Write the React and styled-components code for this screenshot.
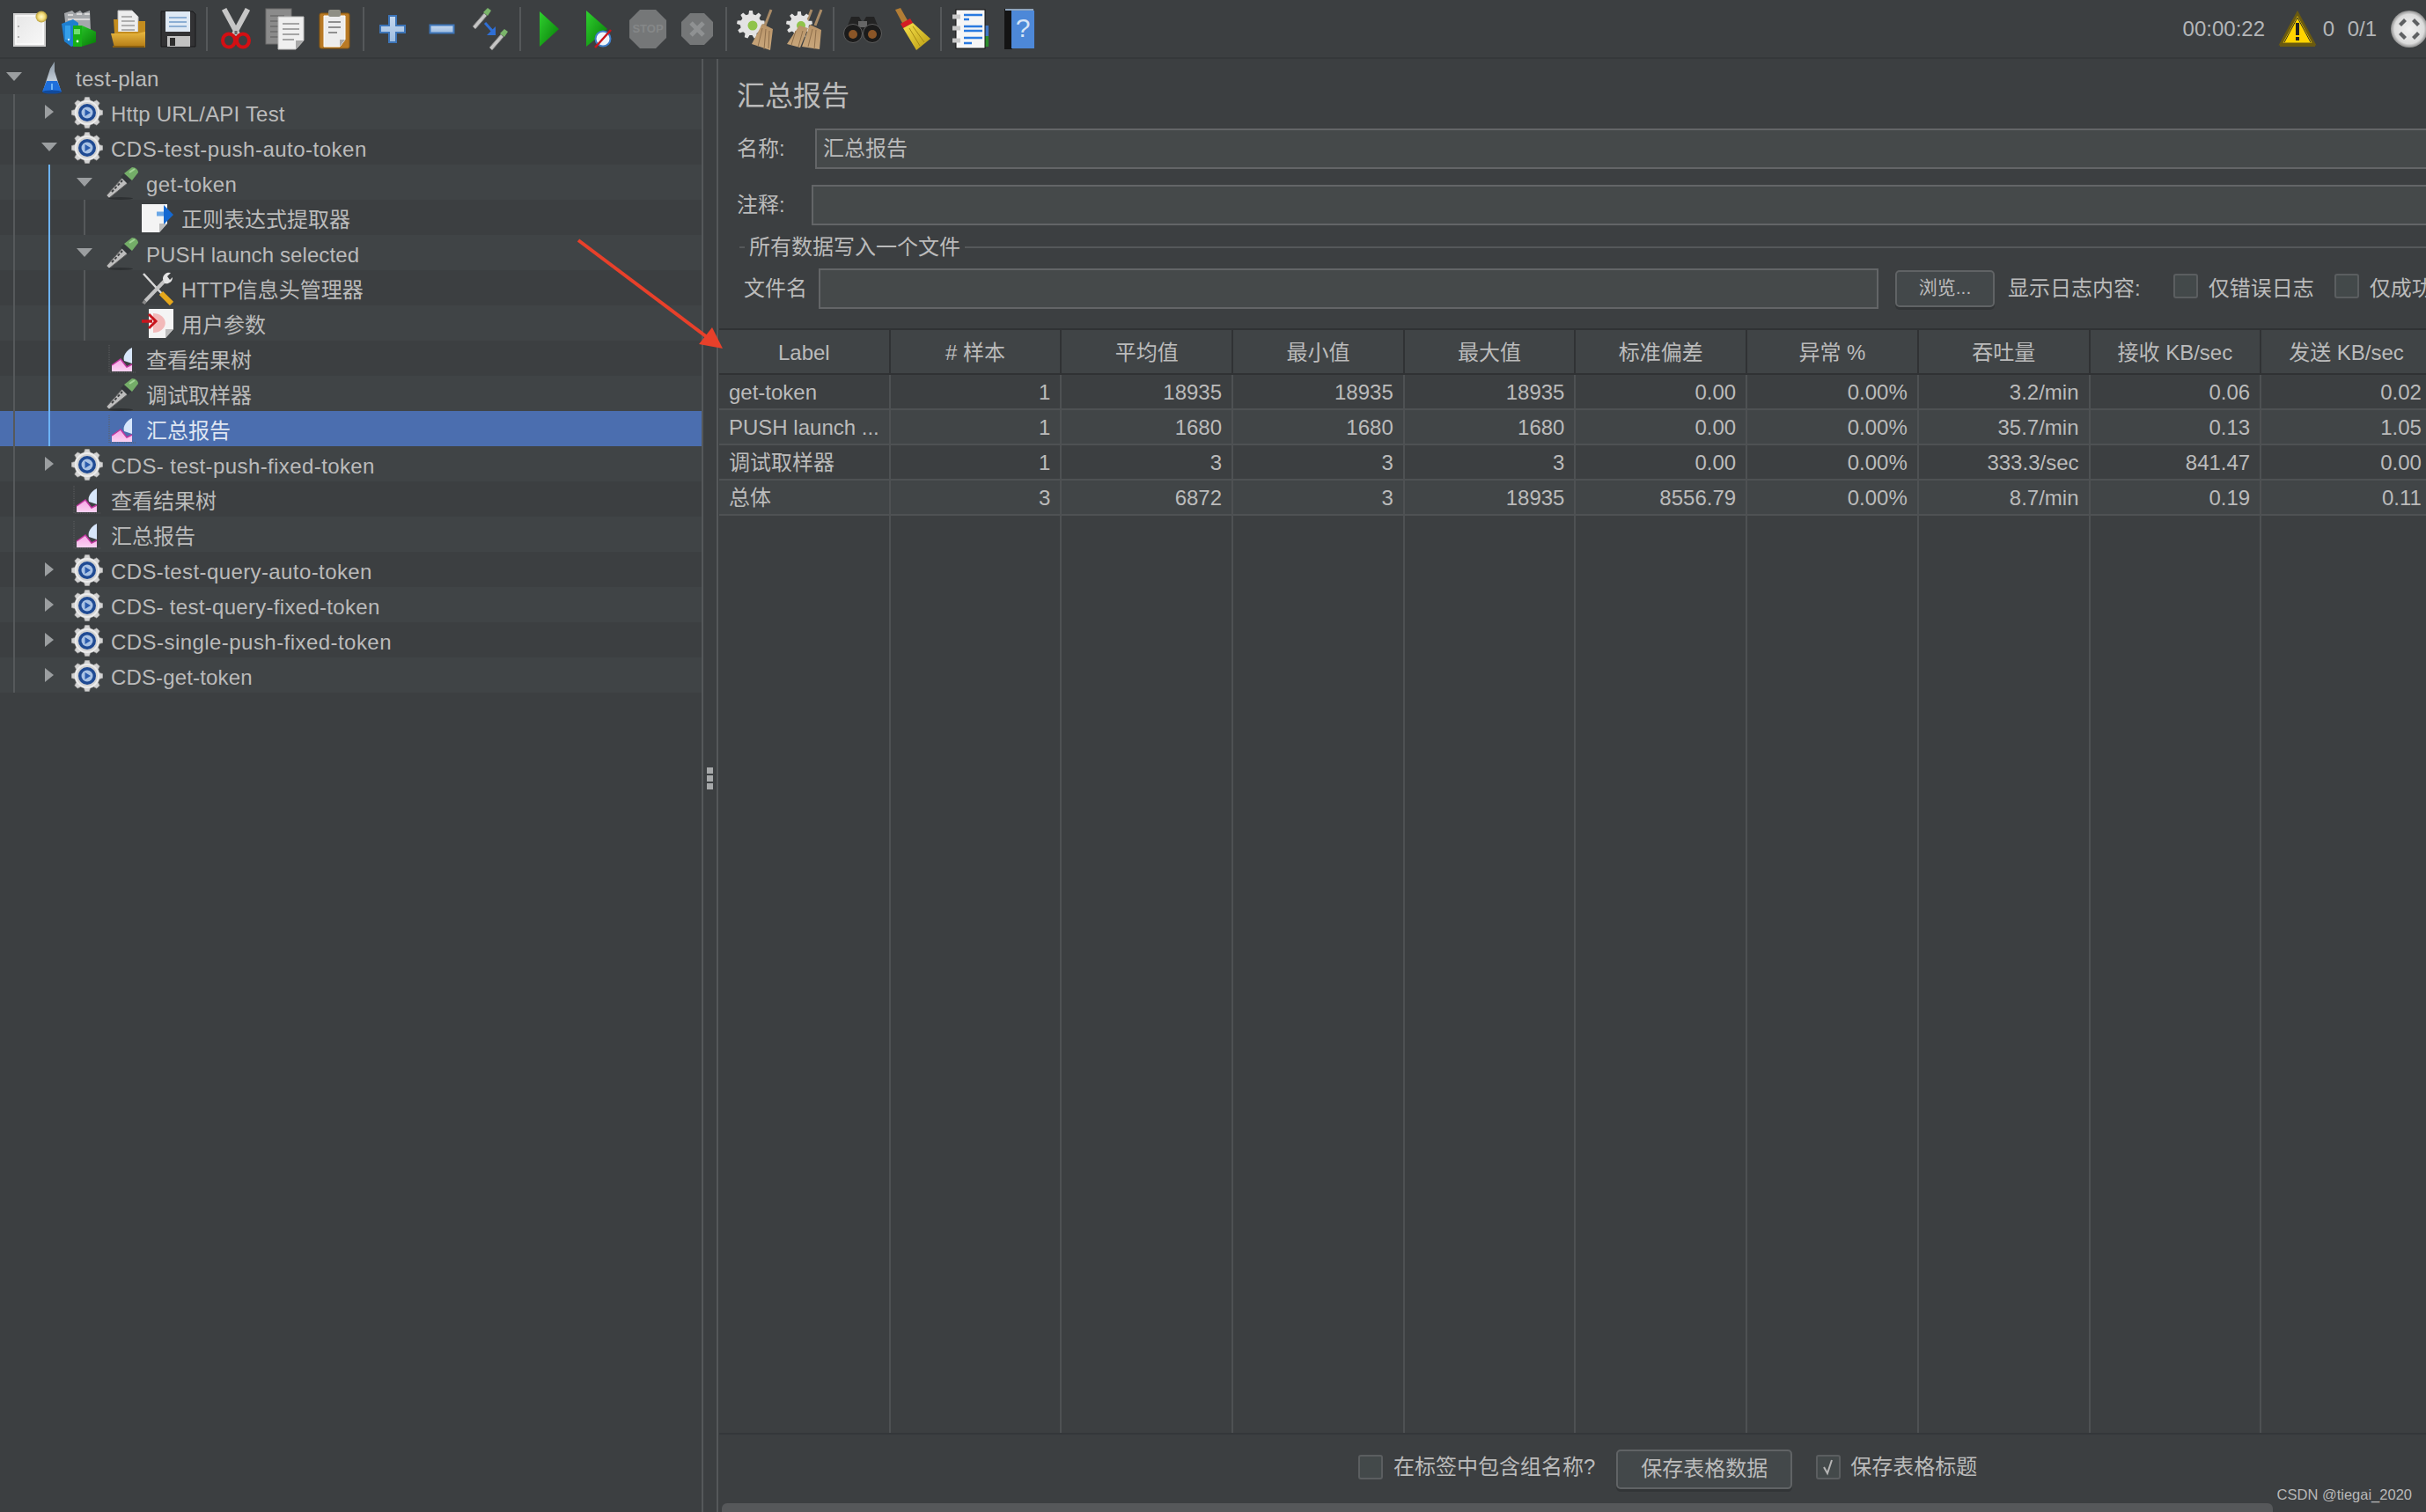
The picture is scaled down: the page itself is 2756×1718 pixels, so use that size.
import React from 'react';
import styled, {createGlobalStyle} from "styled-components";

const gearPath = (cx, cy, outer, inner, teeth) => {
    const pts = [];
    const step = (Math.PI * 2) / teeth;
    for (let i = 0; i < teeth; i++) {
        const a = i * step - Math.PI / 2;
        const corners = [[a - step * 0.32, inner], [a - step * 0.17, outer], [a + step * 0.17, outer], [a + step * 0.32, inner]];
        corners.forEach(([ang, r]) => {
            pts.push(`${(cx + Math.cos(ang) * r).toFixed(2)} ${(cy + Math.sin(ang) * r).toFixed(2)}`);
        });
    }
    return `M${pts.join('L')}Z`;
};

const SharedDefs = () => (
    <DefsSvg aria-hidden="true">
        <defs>
            <linearGradient id="paper" x1="0" y1="0" x2="1" y2="1">
                <stop offset="0" stopColor="#e6e6e6"/>
                <stop offset="1" stopColor="#f8f8f8"/>
            </linearGradient>
            <radialGradient id="glow">
                <stop offset="0" stopColor="#fff9c8"/>
                <stop offset="0.55" stopColor="#f4dd7c"/>
                <stop offset="1" stopColor="#b99f3a"/>
            </radialGradient>
            <linearGradient id="folder" x1="0" y1="0" x2="0" y2="1">
                <stop offset="0" stopColor="#e9b840"/>
                <stop offset="1" stopColor="#b27a14"/>
            </linearGradient>
            <linearGradient id="green" x1="0" y1="0" x2="1" y2="1">
                <stop offset="0" stopColor="#2fd12f"/>
                <stop offset="1" stopColor="#067a06"/>
            </linearGradient>
            <linearGradient id="bluePlus" x1="0" y1="0" x2="0" y2="1">
                <stop offset="0" stopColor="#c5d8ef"/>
                <stop offset="1" stopColor="#9dbce0"/>
            </linearGradient>
            <linearGradient id="broom" x1="0" y1="0" x2="0" y2="1">
                <stop offset="0" stopColor="#b99468"/>
                <stop offset="1" stopColor="#c9a77c"/>
            </linearGradient>
            <linearGradient id="yellowBroom" x1="0" y1="0" x2="1" y2="1">
                <stop offset="0" stopColor="#f8e24a"/>
                <stop offset="1" stopColor="#b89a12"/>
            </linearGradient>
            <radialGradient id="wheel">
                <stop offset="0" stopColor="#f2f2f2"/>
                <stop offset="0.8" stopColor="#dcdcdc"/>
                <stop offset="1" stopColor="#8d8d8d"/>
            </radialGradient>
            <linearGradient id="flask" x1="0" y1="0" x2="0" y2="1">
                <stop offset="0" stopColor="#8795a3"/>
                <stop offset="1" stopColor="#e3ebf3"/>
            </linearGradient>
            <linearGradient id="pink" x1="0" y1="0" x2="0" y2="1">
                <stop offset="0" stopColor="#f6a6e6"/>
                <stop offset="1" stopColor="#fbd2f2"/>
            </linearGradient>
        </defs>
    </DefsSvg>
);

const NewDocIcon = () => (
    <svg width="40" height="42" viewBox="0 0 40 42">
        <rect x="2" y="4" width="35" height="36" fill="url(#paper)" stroke="#d2d2d2" strokeWidth="2"/>
        <rect x="4" y="6" width="31" height="32" fill="none" stroke="#fff" strokeWidth="1"/>
        <circle cx="7" cy="18" r="1" fill="#9a9a9a"/>
        <circle cx="7" cy="30" r="1" fill="#9a9a9a"/>
        <circle cx="33" cy="7" r="6.5" fill="url(#glow)"/>
    </svg>
);

const TemplateIcon = () => (
    <svg width="42" height="46" viewBox="0 0 42 46">
        <path d="M4 5l9-3 3 3 6-3 3 3 8-3 1 22H6z" fill="#a5a8ab"/>
        <path d="M8 7h6M18 6h6M27 6h6M8 12h25" stroke="#d8d8d8" strokeWidth="2"/>
        <path d="M1 17l13-5 6 4v24l-8 3-8-6z" fill="#1d7fd0"/>
        <rect x="5" y="19" width="6" height="16" fill="#35a0ea"/>
        <circle cx="9" cy="35" r="1.2" fill="#d7eefc"/>
        <path d="M14 20l10-1 16 7v12l-17 5-9-1z" fill="url(#green)"/>
        <rect x="14" y="19" width="10" height="24" fill="#17b017"/>
        <rect x="15" y="23" width="7" height="6" fill="#6fe06f"/>
        <circle cx="19" cy="37" r="1.4" fill="#e5ffe5"/>
    </svg>
);

const OpenIcon = () => (
    <svg width="42" height="46" viewBox="0 0 42 46">
        <path d="M9 2h16l7 7v18H9z" fill="#ededed" stroke="#bdbdbd"/>
        <path d="M13 9h12M13 14h15M13 19h15M13 24h15" stroke="#9a9a9a" strokeWidth="1.5"/>
        <path d="M4 12h5v14h23V14h8v28H6z" fill="#c48d1f"/>
        <path d="M1 28h30l9-2v18H5z" fill="url(#folder)"/>
        <rect x="3" y="42" width="36" height="2" fill="#8b5f10"/>
    </svg>
);

const SaveIcon = () => (
    <svg width="42" height="46" viewBox="0 0 42 46">
        <path d="M2 3h36l3 3v37H2z" fill="#323234" stroke="#18181a"/>
        <rect x="7" y="3" width="28" height="23" fill="#dfe9f4"/>
        <path d="M11 10h20M11 15h20M11 20h20" stroke="#8dafd4" strokeWidth="2"/>
        <rect x="9" y="31" width="26" height="12" fill="#c2c2c2"/>
        <rect x="12" y="33" width="6" height="9" fill="#2e2e2e"/>
    </svg>
);

const ScissorsIcon = () => (
    <svg width="36" height="48" viewBox="0 0 36 48">
        <path d="M6 4l13 24M30 4L17 28" stroke="#c6c6c6" strokeWidth="6" strokeLinecap="square"/>
        <path d="M18 26v4" stroke="#666" strokeWidth="3"/>
        <ellipse cx="10" cy="37" rx="7" ry="7.5" fill="none" stroke="#d30f13" strokeWidth="4"/>
        <ellipse cx="26" cy="37" rx="7" ry="7.5" fill="none" stroke="#d30f13" strokeWidth="4"/>
    </svg>
);

const CopyIcon = () => (
    <svg width="46" height="50" viewBox="0 0 46 50">
        <rect x="1" y="2" width="29" height="40" fill="#8b8b8b" stroke="#6f6f6f"/>
        <path d="M6 10h16M6 16h16M6 22h16M6 28h16M6 34h16" stroke="#737373" strokeWidth="2"/>
        <path d="M15 11h29v27l-9 10H15z" fill="#efefef" stroke="#bdbdbd"/>
        <path d="M35 48V38h9z" fill="#a8a8a8"/>
        <path d="M20 19h19M20 25h19M20 31h19M20 37h13" stroke="#a5a5a5" strokeWidth="2"/>
    </svg>
);

const PasteIcon = () => (
    <svg width="36" height="48" viewBox="0 0 36 48">
        <rect x="1" y="6" width="34" height="40" rx="2" fill="#b97a25" stroke="#8a5810"/>
        <path d="M6 9h24v27l-6 8H6z" fill="#ededed" stroke="#fff"/>
        <path d="M24 44v-8h6z" fill="#aaa"/>
        <rect x="11" y="2" width="14" height="8" rx="2" fill="#8f8f85"/>
        <path d="M11 16h14M11 22h14M11 28h10" stroke="#8f8f8f" strokeWidth="2"/>
    </svg>
);

const PlusIcon = () => (
    <svg width="30" height="34" viewBox="0 0 30 34">
        <path d="M11 2h8v11h10v8H19v11h-8V21H1v-8h10z" fill="url(#bluePlus)" stroke="#3d75b8" strokeWidth="2"/>
    </svg>
);

const MinusIcon = () => (
    <svg width="30" height="12" viewBox="0 0 30 12">
        <rect x="1.5" y="1.5" width="27" height="9" fill="url(#bluePlus)" stroke="#3d75b8" strokeWidth="2"/>
    </svg>
);

const MiniPipette = ({x, y}) => (
    <g transform={`translate(${x} ${y})`}>
        <path d="M1 22L14 7l3 3L4 25z" fill="#c5c5c5" stroke="#7d7d7d"/>
        <path d="M13 6l5-5 4 3-4 6z" fill="#7ab56a"/>
    </g>
);

const ToggleIcon = () => (
    <svg width="44" height="50" viewBox="0 0 44 50">
        <MiniPipette x={0} y={0}/>
        <MiniPipette x={19} y={24}/>
        <path d="M15 18l9 10" stroke="#2f6fd6" strokeWidth="3"/>
        <path d="M27 22v10H17z" fill="#2f6fd6"/>
    </svg>
);

const PlayIcon = () => (
    <svg width="24" height="44" viewBox="0 0 24 44">
        <path d="M1 2l22 20L1 42z" fill="url(#green)"/>
    </svg>
);

const PlayNoTimerIcon = () => (
    <svg width="30" height="44" viewBox="0 0 30 44">
        <path d="M1 1l24 21L1 42z" fill="url(#green)"/>
        <circle cx="20" cy="33" r="8.5" fill="#eef4fb" stroke="#3f7dc8" strokeWidth="2"/>
        <path d="M11 43l18-20" stroke="#c9141a" strokeWidth="2.5"/>
    </svg>
);

const StopIcon = () => (
    <svg width="44" height="46" viewBox="0 0 44 46">
        <path d="M13 1h18l12 12v20L31 45H13L1 33V13z" fill="#757778"/>
        <StopText x="22" y="27" textAnchor="middle">STOP</StopText>
    </svg>
);

const ShutdownIcon = () => (
    <svg width="38" height="38" viewBox="0 0 38 38">
        <path d="M11 1h16l10 10v16L27 37H11L1 27V11z" fill="#757778"/>
        <path d="M12 12l14 14M26 12L12 26" stroke="#8f9192" strokeWidth="5"/>
    </svg>
);

const ClearIcon = () => (
    <svg width="42" height="48" viewBox="0 0 42 48">
        <path d={gearPath(16, 19, 16, 12, 9)} fill="#e3e3e3"/>
        <circle cx="18" cy="20" r="5.5" fill="#8fc34a"/>
        <path d="M39 2l-7 18" stroke="#a98b67" strokeWidth="3"/>
        <path d="M29 18l12 6-3 24-21-7z" fill="url(#broom)"/>
        <path d="M29 23l-5 21M33 24l-2 23M37 26l-1 20" stroke="#8e6f4c"/>
    </svg>
);

const ClearAllIcon = () => (
    <svg width="44" height="48" viewBox="0 0 44 48">
        <path d="M41 2l-7 18M30 2l-7 18" stroke="#a98b67" strokeWidth="3"/>
        <path d={gearPath(16, 19, 15, 11, 9)} fill="#e3e3e3"/>
        <circle cx="18" cy="20" r="5" fill="#8fc34a"/>
        <path d="M16 20l10 3-9 22-15-4z" fill="url(#broom)"/>
        <path d="M28 19l13 6-2 22-20-3z" fill="url(#broom)"/>
        <path d="M31 24l-5 20M35 25l-2 22M12 26l-5 16M20 26l-5 18" stroke="#8e6f4c"/>
    </svg>
);

const BinocularsIcon = () => (
    <svg width="44" height="34" viewBox="0 0 44 34">
        <path d="M9 3h9l4 7 4-7h9l8 20H1z" fill="#232323"/>
        <rect x="17" y="8" width="10" height="7" fill="#666"/>
        <circle cx="11" cy="22" r="10.5" fill="#1b1b1b" stroke="#5d5d5d"/>
        <circle cx="33" cy="22" r="10.5" fill="#1b1b1b" stroke="#5d5d5d"/>
        <circle cx="11" cy="23" r="5" fill="#8a5527"/>
        <circle cx="33" cy="23" r="5" fill="#8a5527"/>
    </svg>
);

const BroomIcon = () => (
    <svg width="44" height="50" viewBox="0 0 44 50">
        <path d="M3 3l6-2 9 16-6 3z" fill="#b27d35"/>
        <path d="M9 19l11-6 3 5-11 6z" fill="#d41c24"/>
        <path d="M12 24l11-6 20 18-16 13z" fill="url(#yellowBroom)"/>
        <path d="M19 24l12 20M23 22l13 18" stroke="#a68a15"/>
    </svg>
);

const ListIcon = () => (
    <svg width="44" height="48" viewBox="0 0 44 48">
        <rect x="38" y="20" width="5" height="12" fill="#3f77c5"/>
        <rect x="38" y="32" width="5" height="12" fill="#2a8b2a"/>
        <rect x="6" y="2" width="33" height="44" fill="#f6f6f6" stroke="#111"/>
        <path d="M2 10h9M2 23h9M2 37h9" stroke="#c9c9c9" strokeWidth="5"/>
        <path d="M15 8h21M15 13h6M15 21h21M15 26h21M15 34h21M15 40h9" stroke="#2a7ae0" strokeWidth="2.5"/>
    </svg>
);

const HelpIcon = () => (
    <svg width="36" height="50" viewBox="0 0 36 50">
        <rect x="1" y="2" width="9" height="46" fill="#141414"/>
        <rect x="9" y="4" width="26" height="43" fill="#4d88d8"/>
        <rect x="2" y="2" width="32" height="2" fill="#8fa5bd"/>
        <HelpText x="22" y="34" textAnchor="middle">?</HelpText>
    </svg>
);

const WarningIcon = () => (
    <svg width="44" height="42" viewBox="0 0 44 42">
        <path d="M22 3l19 35H3z" fill="#ffd400" stroke="#6a5a10" strokeWidth="3"/>
        <path d="M22 8L7 36" stroke="#2a2a2a" strokeWidth="1"/>
        <path d="M22 8l15 28" stroke="#2a2a2a" strokeWidth="1"/>
        <rect x="20" y="14" width="4" height="14" fill="#222"/>
        <rect x="20" y="30" width="4" height="4" fill="#222"/>
        <rect x="2" y="38" width="40" height="3" fill="#6a5a10"/>
    </svg>
);

const WheelIcon = () => (
    <svg width="41" height="44" viewBox="0 0 41 44">
        <circle cx="22" cy="22" r="21" fill="url(#wheel)"/>
        <path d="M10 16l6-6 3 3-6 6zM34 16l-6-6-3 3 6 6zM10 28l6 6 3-3-6-6zM34 28l-6 6-3-3 6-6z" fill="#5f6163"/>
    </svg>
);

const FlaskIcon = () => (
    <svg width="24" height="38" viewBox="0 0 24 38">
        <path d="M10 9l5-8v11l7 22H2z" fill="url(#flask)"/>
        <path d="M6 23h12l5 12H1z" fill="#1e6fdc"/>
        <ellipse cx="12" cy="35.5" rx="11" ry="2" fill="#114a9c"/>
        <rect x="11" y="26" width="2" height="7" fill="#6fb4f5"/>
    </svg>
);

const GearIcon = () => (
    <svg width="36" height="36" viewBox="0 0 36 36">
        <path d={gearPath(18, 18, 18, 14.5, 8)} fill="#d2d2d2" stroke="#8c8c8c" strokeWidth="0.6"/>
        <circle cx="18" cy="18" r="13" fill="none" stroke="#ececec" strokeWidth="2"/>
        <circle cx="18" cy="18" r="10" fill="#1f4a93"/>
        <circle cx="18" cy="18" r="6.5" fill="#a9c2e4"/>
        <path d="M15.5 14l6.5 4-6.5 4z" fill="#2a5bad"/>
    </svg>
);

const PipetteIcon = () => (
    <svg width="38" height="38" viewBox="0 0 38 38">
        <path d="M1 33L19 13l6 6L4 36z" fill="#bdbdbd" stroke="#5d5d5d"/>
        <path d="M7 29l12-13" stroke="#3f4143" strokeWidth="2" strokeDasharray="3 2"/>
        <path d="M17 12l4-4 8 8-4 4z" fill="#33373a"/>
        <path d="M21 8l9-7c4 0 7 3 7 6l-7 9z" fill="#74ad68"/>
        <path d="M27 7l6-4" stroke="#a3d596" strokeWidth="2"/>
        <ellipse cx="17" cy="36.5" rx="14" ry="1.5" fill="#2d3032"/>
    </svg>
);

const ExtractorIcon = () => (
    <svg width="38" height="36" viewBox="0 0 38 36">
        <path d="M1 2h29v22l-9 10H1z" fill="#f4f4f4"/>
        <path d="M21 34V24h9z" fill="#bcbcbc"/>
        <path d="M18 13h10" stroke="#6aa7e6" strokeWidth="5"/>
        <path d="M26 3l11 11-11 11z" fill="#1469d2"/>
    </svg>
);

const ToolsIcon = () => (
    <svg width="36" height="38" viewBox="0 0 36 38">
        <path d="M2 2l22 24" stroke="#d9d9d9" strokeWidth="2.5"/>
        <path d="M22 24l12 12" stroke="#e6a81c" strokeWidth="6"/>
        <path d="M28 8L4 33" stroke="#c3c3c3" strokeWidth="4"/>
        <path d="M4 33l-2 3" stroke="#888" strokeWidth="4"/>
        <path d="M24 8a7 7 0 0 1 9-7l-4 4 3 4 3-3a7 7 0 0 1-9 7z" fill="#e4e4e4"/>
    </svg>
);

const ParamIcon = () => (
    <svg width="38" height="36" viewBox="0 0 38 36">
        <path d="M9 1h28v23l-9 10H9z" fill="#f4f4f4"/>
        <path d="M28 34V24h9z" fill="#bcbcbc"/>
        <path d="M14 6a10 8 0 0 1 0 22z" fill="#f2b9b9"/>
        <path d="M1 15h12" stroke="#c8141c" strokeWidth="3.5"/>
        <path d="M9 7l8 8-8 8" fill="none" stroke="#c8141c" strokeWidth="3"/>
    </svg>
);

const GraphIcon = () => (
    <svg width="32" height="34" viewBox="0 0 32 34">
        <path d="M1 1v31h30" fill="none" stroke="#5c5f61" strokeDasharray="1 1"/>
        <path d="M4 31V24l10-7 7 9 6-3v8z" fill="url(#pink)"/>
        <path d="M4 24l10-7 7 9 6-3" fill="none" stroke="#c0379f" strokeWidth="1.5"/>
        <path d="M18 19c-2-6 3-12 9-15v18z" fill="#d8e7fb"/>
    </svg>
);

const Arrow = styled.span`
  width: 0;
  height: 0;
  border-style: solid;
  border-color: transparent;
  ${({$open}) => $open
    ? 'border-width: 10px 9px 0 9px; border-top-color: #9b9ea0;'
    : 'border-width: 8px 0 8px 10px; border-left-color: #9b9ea0;'}
`;

const TREE = [
    {level: 0, open: true, icon: FlaskIcon, text: 'test-plan', guides: [], track: 0.3},
    {level: 1, open: false, icon: GearIcon, text: 'Http URL/API Test', guides: [15], track: 0.2},
    {level: 1, open: true, icon: GearIcon, text: 'CDS-test-push-auto-token', guides: [15], track: 0.5},
    {level: 2, open: true, icon: PipetteIcon, text: 'get-token', guides: [15], blue: true, track: 0.35},
    {level: 3, icon: ExtractorIcon, text: '正则表达式提取器', guides: [15, 95], blue: true},
    {level: 2, open: true, icon: PipetteIcon, text: 'PUSH launch selected', guides: [15], blue: true, track: 0.1},
    {level: 3, icon: ToolsIcon, text: 'HTTP信息头管理器', guides: [15, 95], blue: true},
    {level: 3, icon: ParamIcon, text: '用户参数', guides: [15, 95], blue: true},
    {level: 2, icon: GraphIcon, text: '查看结果树', guides: [15], blue: true},
    {level: 2, icon: PipetteIcon, text: '调试取样器', guides: [15], blue: true},
    {level: 2, icon: GraphIcon, text: '汇总报告', guides: [15], blue: true, selected: true},
    {level: 1, open: false, icon: GearIcon, text: 'CDS- test-push-fixed-token', guides: [15], track: 0.4},
    {level: 1, icon: GraphIcon, text: '查看结果树', guides: [15]},
    {level: 1, icon: GraphIcon, text: '汇总报告', guides: [15]},
    {level: 1, open: false, icon: GearIcon, text: 'CDS-test-query-auto-token', guides: [15], track: 0.4},
    {level: 1, open: false, icon: GearIcon, text: 'CDS- test-query-fixed-token', guides: [15], track: 0.3},
    {level: 1, open: false, icon: GearIcon, text: 'CDS-single-push-fixed-token', guides: [15], track: 0.45},
    {level: 1, open: false, icon: GearIcon, text: 'CDS-get-token', guides: [15], track: 0.15},
];

const TOOL_GROUPS = [
    [NewDocIcon, TemplateIcon, OpenIcon, SaveIcon],
    [ScissorsIcon, CopyIcon, PasteIcon],
    [PlusIcon, MinusIcon, ToggleIcon],
    [PlayIcon, PlayNoTimerIcon, StopIcon, ShutdownIcon],
    [ClearIcon, ClearAllIcon],
    [BinocularsIcon, BroomIcon],
    [ListIcon, HelpIcon],
];

const HEADERS = ['Label', '# 样本', '平均值', '最小值', '最大值', '标准偏差', '异常 %', '吞吐量', '接收 KB/sec', '发送 KB/sec'];

const ROWS = [
    ['get-token', '1', '18935', '18935', '18935', '0.00', '0.00%', '3.2/min', '0.06', '0.02'],
    ['PUSH launch ...', '1', '1680', '1680', '1680', '0.00', '0.00%', '35.7/min', '0.13', '1.05'],
    ['调试取样器', '1', '3', '3', '3', '0.00', '0.00%', '333.3/sec', '841.47', '0.00'],
    ['总体', '3', '6872', '3', '18935', '8556.79', '0.00%', '8.7/min', '0.19', '0.11'],
];

const App = () => {
    return (
        <Page>
            <GlobalStyle/>
            <SharedDefs/>
            <Toolbar>
                {TOOL_GROUPS.map((group, i) => (
                    <React.Fragment key={i}>
                        {i > 0 && <ToolSeparator/>}
                        {group.map((Icon, j) => <ToolSlot key={j}><Icon/></ToolSlot>)}
                    </React.Fragment>
                ))}
                <Status>
                    <StatusText $gap={15}>00:00:22</StatusText>
                    <WarningIcon/>
                    <StatusText $width={20}>0</StatusText>
                    <StatusText $width={48} $gap={15}>0/1</StatusText>
                    <WheelIcon/>
                </Status>
            </Toolbar>
            <Main>
                <TreePanel>
                    {TREE.map((row, i) => {
                        const Icon = row.icon;
                        return (
                            <TreeRow key={i} $odd={i % 2 === 1} $selected={row.selected} $level={row.level}>
                                {row.guides.map((x) => <Guide key={x} $x={x}/>)}
                                {row.blue && <Guide $x={55} $blue/>}
                                <ArrowSlot>
                                    {row.open !== undefined && <Arrow $open={row.open}/>}
                                </ArrowSlot>
                                <IconSlot><Icon/></IconSlot>
                                <TreeText $selected={row.selected} $track={row.track}>{row.text}</TreeText>
                            </TreeRow>
                        );
                    })}
                </TreePanel>
                <Splitter>
                    <SplitDot/>
                    <SplitDot/>
                    <SplitDot/>
                </Splitter>
                <Report>
                    <Form>
                        <Title>汇总报告</Title>
                        <FieldRow>
                            <FieldLabel $width={89}>名称:</FieldLabel>
                            <Field>汇总报告</Field>
                        </FieldRow>
                        <FieldRow $gap={18}>
                            <FieldLabel $width={85}>注释:</FieldLabel>
                            <Field/>
                        </FieldRow>
                        <GroupTitle>
                            <GroupDash/>
                            <span>所有数据写入一个文件</span>
                            <GroupLine/>
                        </GroupTitle>
                        <FileRow>
                            <FieldLabel $width={85}>文件名</FieldLabel>
                            <Field $width={1204}/>
                            <BrowseButton>浏览...</BrowseButton>
                            <PlainLabel>显示日志内容:</PlainLabel>
                            <Check $left={37} $raise={6}/>
                            <PlainLabel $left={12}>仅错误日志</PlainLabel>
                            <Check $left={23} $raise={6}/>
                            <PlainLabel $left={12}>仅成功日志</PlainLabel>
                        </FileRow>
                    </Form>
                    <Table>
                        <Columns $header>
                            {HEADERS.map((h) => <HeadCell key={h}>{h}</HeadCell>)}
                        </Columns>
                        {ROWS.map((row, i) => (
                            <Columns key={i} $odd={i % 2 === 1}>
                                {row.map((cell, j) => <Cell key={j} $left={j === 0}>{cell}</Cell>)}
                            </Columns>
                        ))}
                        <Columns $filler>
                            {HEADERS.map((h) => <FillerCell key={h}/>)}
                        </Columns>
                    </Table>
                    <Footer>
                        <Check/>
                        <PlainLabel $left={12}>在标签中包含组名称?</PlainLabel>
                        <SaveButton>保存表格数据</SaveButton>
                        <Check>
                            <svg width="16" height="20" viewBox="0 0 16 20">
                                <path d="M3 10l4 7 5-15" fill="none" stroke="#b5b5b5" strokeWidth="2"/>
                            </svg>
                        </Check>
                        <PlainLabel $left={11}>保存表格标题</PlainLabel>
                    </Footer>
                    <ScrollTrack><ScrollThumb/></ScrollTrack>
                </Report>
            </Main>
            <Annotation width="180" height="135" viewBox="0 0 180 135">
                <path d="M2 2L156 118" stroke="#e8402a" strokeWidth="4"/>
                <path d="M166 125l-27-5 15-19z" fill="#e8402a"/>
            </Annotation>
            <Watermark>CSDN @tiegai_2020</Watermark>
        </Page>
    );
};

const GlobalStyle = createGlobalStyle`
  html, body {
    margin: 0;
    padding: 0;
    background: #3c3f41;
  }
`;

const DefsSvg = styled.svg`
  position: absolute;
  width: 0;
  height: 0;
`;

const StopText = styled.text`
  font-family: "Liberation Sans", sans-serif;
  font-size: 13px;
  font-weight: bold;
  fill: #858788;
`;

const HelpText = styled.text`
  font-family: "Liberation Sans", sans-serif;
  font-size: 30px;
  fill: #d6e4f6;
`;

const Page = styled.div`
  position: relative;
  width: 2756px;
  height: 1718px;
  overflow: hidden;
  display: flex;
  flex-direction: column;
  background: #3c3f41;
  color: #bbbbbb;
  font-family: "Liberation Sans", "Noto Sans CJK SC", sans-serif;
  font-size: 24px;
  line-height: 30px;
`;

const Toolbar = styled.div`
  height: 67px;
  flex: none;
  box-sizing: border-box;
  display: flex;
  align-items: center;
  padding-left: 6px;
  border-bottom: 2px solid #35383a;
`;

const ToolSlot = styled.div`
  width: 56px;
  display: flex;
  align-items: center;
  justify-content: center;
`;

const ToolSeparator = styled.div`
  width: 2px;
  height: 50px;
  margin: 0 4px;
  background: #55585a;
`;

const Status = styled.div`
  margin-left: auto;
  display: flex;
  align-items: center;
  color: #b4b6b8;
`;

const StatusText = styled.span`
  width: ${({$width}) => $width ? `${$width}px` : 'auto'};
  margin-right: ${({$gap}) => $gap || 0}px;
  text-align: right;
  white-space: nowrap;
`;

const Main = styled.div`
  flex: 1;
  min-height: 0;
  display: flex;
`;

const TreePanel = styled.div`
  width: 797px;
  flex: none;
`;

const TreeRow = styled.div`
  position: relative;
  height: 40px;
  display: flex;
  align-items: center;
  padding-left: ${({$level}) => $level * 40}px;
  background: ${({$selected, $odd}) => $selected ? '#4b6eaf' : $odd ? '#404446' : '#3c3f41'};
`;

const Guide = styled.span`
  position: absolute;
  top: 0;
  bottom: 0;
  left: ${({$x}) => $x}px;
  width: 2px;
  background: ${({$blue}) => $blue ? '#6db3f7' : '#56595b'};
`;

const ArrowSlot = styled.div`
  width: 32px;
  flex: none;
  display: flex;
  justify-content: center;
`;

const IconSlot = styled.div`
  width: 54px;
  flex: none;
  padding: 1px 0 0;
  box-sizing: border-box;
  display: flex;
  justify-content: center;
  align-items: center;
`;

const TreeText = styled.span`
  white-space: nowrap;
  padding-top: 5px;
  line-height: 35px;
  letter-spacing: ${({$track}) => $track || 0}px;
  color: ${({$selected}) => $selected ? '#dfe6f2' : '#bbbbbb'};
`;

const Splitter = styled.div`
  width: 19px;
  flex: none;
  box-sizing: border-box;
  border-left: 2px solid #55585a;
  border-right: 2px solid #55585a;
  display: flex;
  flex-direction: column;
  align-items: center;
  justify-content: center;
  gap: 2px;
  padding-bottom: 16px;
`;

const SplitDot = styled.span`
  width: 7px;
  height: 7px;
  background: #a6a8a9;
`;

const Report = styled.div`
  flex: 1;
  min-width: 0;
  display: flex;
  flex-direction: column;
  overflow: hidden;
`;

const Form = styled.div`
  flex: none;
  height: 306px;
  padding-left: 21px;
  box-sizing: border-box;
`;

const Title = styled.div`
  font-size: 32px;
  height: 60px;
  margin: 11px 0 8px;
  line-height: 62px;
`;

const FieldRow = styled.div`
  display: flex;
  align-items: center;
  margin-top: ${({$gap}) => $gap || 0}px;
  margin-right: -10px;
`;

const FieldLabel = styled.div`
  width: ${({$width}) => $width}px;
  flex: none;
  white-space: nowrap;
`;

const Field = styled.div`
  height: 46px;
  box-sizing: border-box;
  flex: ${({$width}) => $width ? 'none' : 1};
  width: ${({$width}) => $width ? `${$width}px` : 'auto'};
  border: 2px solid #636567;
  background: #45494a;
  padding-left: 7px;
  line-height: 42px;
`;

const GroupTitle = styled.div`
  height: 49px;
  display: flex;
  align-items: center;
  box-sizing: border-box;
  margin-left: 3px;
`;

const GroupDash = styled.span`
  width: 6px;
  height: 2px;
  background: #55585a;
  margin-right: 5px;
`;

const GroupLine = styled.span`
  flex: 1;
  height: 2px;
  background: #55585a;
  margin-left: 5px;
`;

const FileRow = styled.div`
  display: flex;
  align-items: center;
  padding-left: 8px;
  white-space: nowrap;
`;

const BrowseButton = styled.div`
  width: 113px;
  height: 42px;
  flex: none;
  margin: 0 15px 0 19px;
  padding-bottom: 3px;
  box-sizing: border-box;
  border: 2px solid #606365;
  border-radius: 5px;
  background: #43484a;
  box-shadow: 0 3px 0 #323537;
  font-size: 21px;
  display: flex;
  align-items: center;
  justify-content: center;
`;

const PlainLabel = styled.span`
  flex: none;
  white-space: nowrap;
  margin-left: ${({$left}) => $left || 0}px;
`;

const Check = styled.span`
  width: 28px;
  height: 28px;
  flex: none;
  box-sizing: border-box;
  margin-left: ${({$left}) => $left || 0}px;
  margin-bottom: ${({$raise}) => $raise || 0}px;
  border: 2px solid #5b5e60;
  border-radius: 3px;
  background: #43494a;
  display: flex;
  align-items: center;
  justify-content: center;
`;

const Table = styled.div`
  flex: 1;
  min-height: 0;
  margin-left: 1px;
  display: flex;
  flex-direction: column;
  border-top: 2px solid #303234;
  border-bottom: 2px solid #34373a;
`;

const Columns = styled.div`
  display: grid;
  grid-template-columns: repeat(10, 194.7px);
  flex: ${({$filler}) => $filler ? 1 : 'none'};
  height: ${({$header, $filler}) => $filler ? 'auto' : $header ? '51px' : '40px'};
  box-sizing: border-box;
  background: ${({$odd, $header}) => $header ? '#404446' : $odd ? '#414547' : '#3c3f41'};
  border-bottom: ${({$filler, $header}) => $filler ? 'none' : $header ? '2px solid #303234' : '2px solid #4e5153'};
`;

const HeadCell = styled.div`
  box-sizing: border-box;
  border-right: 2px solid #303234;
  padding-top: 2px;
  display: flex;
  align-items: center;
  justify-content: center;
  white-space: nowrap;
`;

const Cell = styled.div`
  box-sizing: border-box;
  border-right: 2px solid #4e5153;
  padding: 0 11px;
  line-height: 39px;
  white-space: nowrap;
  overflow: hidden;
  text-align: ${({$left}) => $left ? 'left' : 'right'};
`;

const FillerCell = styled.div`
  box-sizing: border-box;
  border-right: 2px solid #4e5153;
`;

const Footer = styled.div`
  height: 78px;
  flex: none;
  box-sizing: border-box;
  display: flex;
  align-items: center;
  padding: 0 0 4px 727px;
`;

const SaveButton = styled.div`
  width: 200px;
  height: 45px;
  flex: none;
  margin: 4px 27px 0 24px;
  box-sizing: border-box;
  border: 2px solid #606365;
  border-radius: 5px;
  background: #43484a;
  box-shadow: 0 3px 0 #323537;
  display: flex;
  align-items: center;
  justify-content: center;
`;

const ScrollTrack = styled.div`
  height: 10px;
  flex: none;
  padding-left: 4px;
`;

const ScrollThumb = styled.div`
  width: 1762px;
  height: 100%;
  background: #56585a;
  border-radius: 6px 6px 0 0;
`;

const Annotation = styled.svg`
  position: absolute;
  left: 655px;
  top: 271px;
`;

const Watermark = styled.div`
  position: absolute;
  right: 16px;
  top: 1688px;
  font-size: 16.5px;
  line-height: 20px;
  color: #b8b8b8;
`;

export default App;
